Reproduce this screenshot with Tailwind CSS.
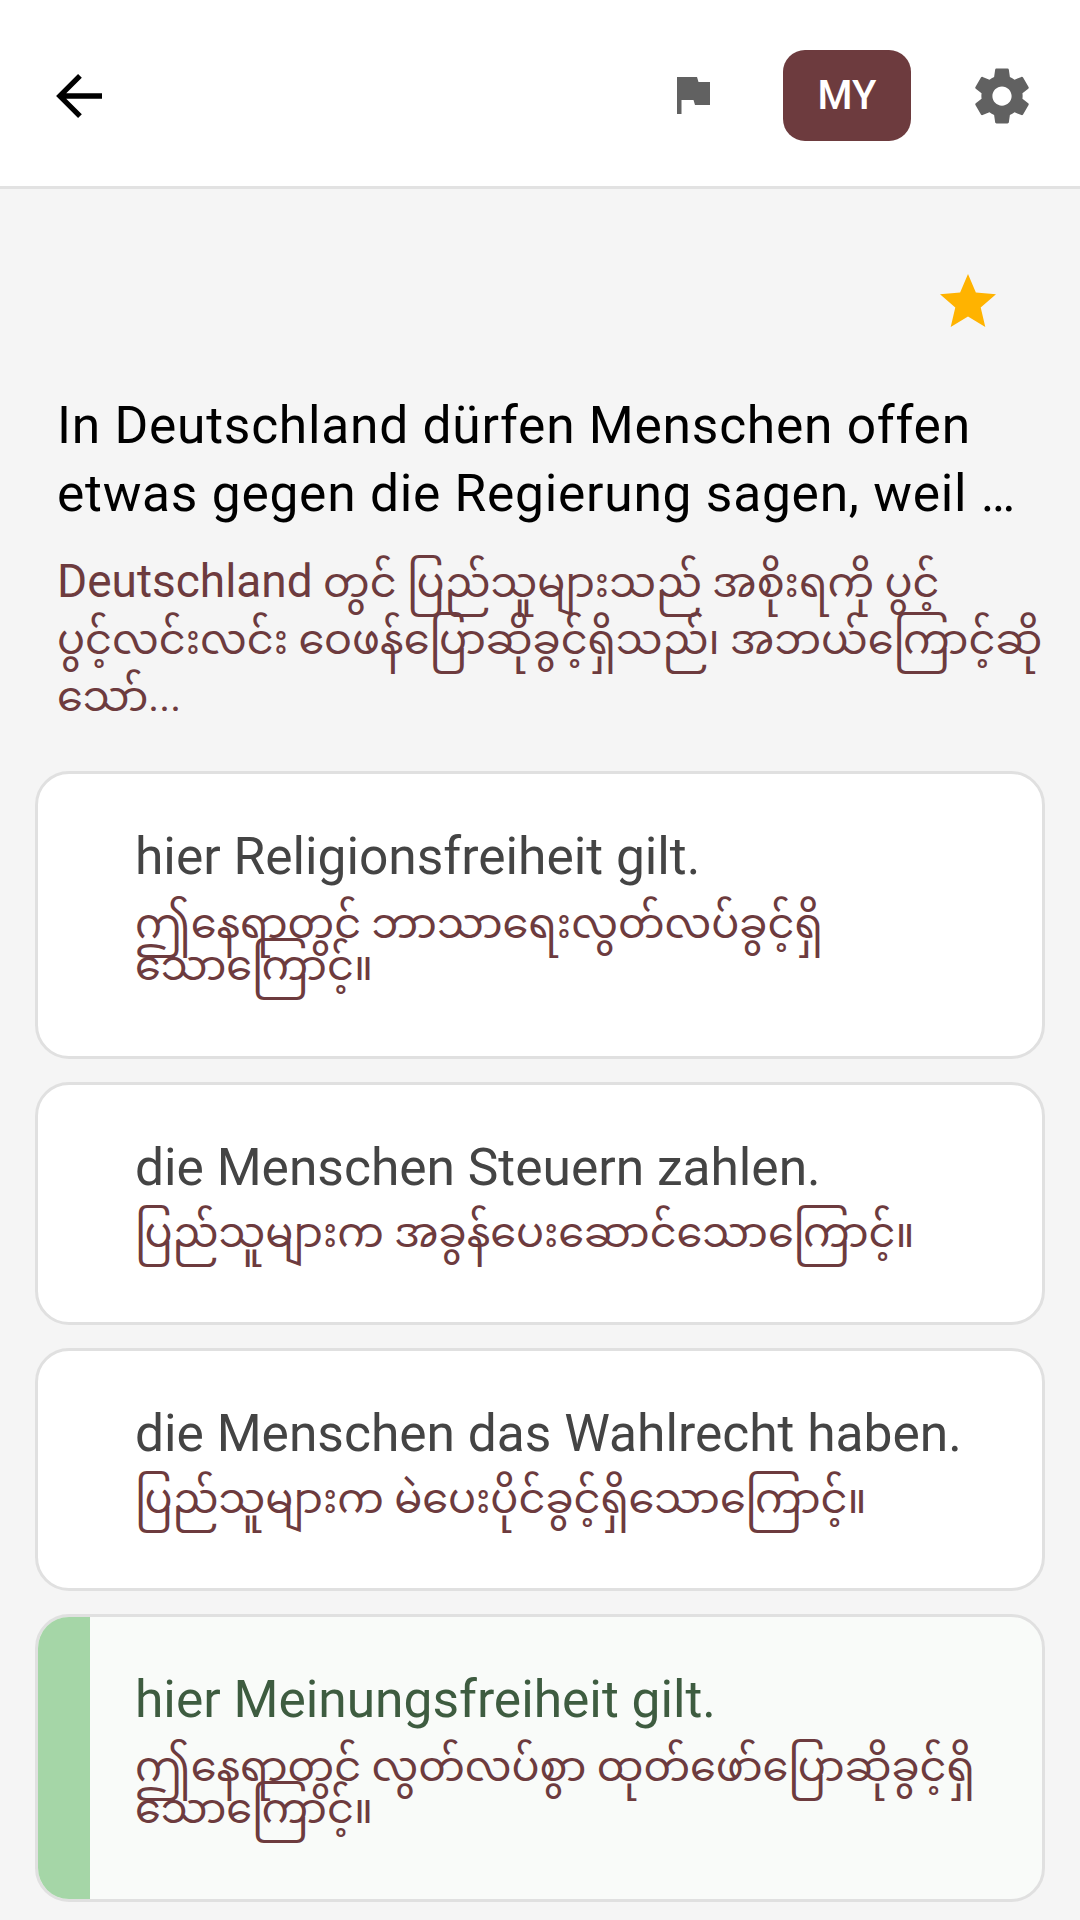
<!DOCTYPE html>
<html lang="my">
<head>
  <meta charset="UTF-8" />
  <title>Frage</title>
  <script src="https://cdn.jsdelivr.net/npm/@tailwindcss/browser@4"></script>
</head>
<body class="w-[1080px] h-[1920px] overflow-hidden bg-[#f5f5f5] font-['Roboto','Noto_Sans','Noto_Sans_Myanmar','Padauk','Myanmar_Text',sans-serif]">

  <!-- Header -->
  <div class="h-[189px] bg-white border-b-[3px] border-[#e2e2e2] flex items-center pt-[5px] pl-[56px] pr-[45px]">
    <svg class="w-[46px] h-[46px]" viewBox="0 0 48 48" fill="none" stroke="#000" stroke-width="5.500">
      <path d="M48 24H4M25 3 4 24l21 21"/>
    </svg>
    <div class="ml-auto flex items-center">
      <svg class="w-[33px] h-[37px]" viewBox="0 0 33 37" fill="#616161">
        <path d="M0 0h20l1.500 5H33v23H18l-1.500-5H4.500v14H0z"/>
      </svg>
      <div class="ml-[73px] w-[128px] h-[91px] rounded-[22px] bg-[#6d3b3e] text-white text-[40px] font-medium flex items-center justify-center">MY</div>
      <svg class="ml-[58px] w-[66px] h-[66px]" viewBox="0 0 24 24" fill="#616161">
        <path d="M19.430 12.980c.04-.32.07-.64.07-.98s-.03-.66-.07-.98l2.110-1.650c.19-.15.24-.42.12-.64l-2-3.460c-.12-.22-.39-.3-.61-.22l-2.490 1c-.52-.4-1.080-.73-1.690-.98l-.38-2.650A.488.488 0 0 0 14 2h-4c-.25 0-.46.18-.49.42l-.38 2.650c-.61.25-1.170.59-1.690.98l-2.490-1c-.23-.09-.49 0-.61.22l-2 3.460c-.13.22-.07.49.12.64l2.110 1.650c-.04.32-.07.65-.07.98s.03.66.07.98l-2.110 1.650c-.19.15-.24.42-.12.64l2 3.460c.12.22.39.3.61.22l2.490-1c.52.4 1.080.73 1.690.98l.38 2.650c.03.24.24.42.49.42h4c.25 0 .46-.18.49-.42l.38-2.650c.61-.25 1.170-.59 1.690-.98l2.490 1c.23.09.49 0 .61-.22l2-3.460c.12-.22.07-.49-.12-.64l-2.110-1.650zM12 15.500c-1.930 0-3.500-1.570-3.500-3.500s1.570-3.500 3.500-3.500 3.500 1.570 3.500 3.500-1.570 3.500-3.500 3.500z"/>
      </svg>
    </div>
  </div>

  <!-- Question -->
  <div class="pl-[57px] pr-[35px] pt-[85px]">
    <div class="flex justify-end pr-[49px]">
      <svg class="w-[56px] h-[53px]" viewBox="2 2 20 19" preserveAspectRatio="none" fill="#ffb300">
        <path d="M12 17.270 18.180 21l-1.640-7.030L22 9.240l-7.190-.61L12 2 9.190 8.630 2 9.240l5.460 4.730L5.820 21z"/>
      </svg>
    </div>
    <p class="mt-[65px] pr-[10px] text-[51.500px] leading-[68px] tracking-[0.750px] text-black">In Deutschland dürfen Menschen offen etwas gegen die Regierung sagen, weil …</p>
    <p class="mt-[25px] text-[41.500px] leading-[57px] text-[#6d3b3e]"><span class="text-[46px]">Deutschland</span> တွင် ပြည်သူများသည် အစိုးရကို ပွင့်ပွင့်လင်းလင်း ဝေဖန်ပြောဆိုခွင့်ရှိသည်၊ အဘယ်ကြောင့်ဆိုသော်...</p>
  </div>

  <!-- Answers -->
  <div class="mt-[46px] mx-[35px] flex flex-col gap-[23px]">
    <div class="bg-white border-[3px] border-[#e0e0e0] rounded-[34px] h-[287.500px] pl-[97px] pr-[40px] pt-[53px]">
      <p class="text-[51.500px] leading-[60px] text-[#444444]">hier Religionsfreiheit gilt.</p>
      <p class="mt-[16px] text-[41.500px] leading-[42px] text-[#6d3b3e]">ဤနေရာတွင် ဘာသာရေးလွတ်လပ်ခွင့်ရှိသောကြောင့်။</p>
    </div>
    <div class="bg-white border-[3px] border-[#e0e0e0] rounded-[34px] h-[243px] pl-[97px] pr-[40px] pt-[53px]">
      <p class="text-[51.500px] leading-[60px] text-[#444444]">die Menschen Steuern zahlen.</p>
      <p class="mt-[14px] text-[41.500px] leading-[42px] text-[#6d3b3e]">ပြည်သူများက အခွန်ပေးဆောင်သောကြောင့်။</p>
    </div>
    <div class="bg-white border-[3px] border-[#e0e0e0] rounded-[34px] h-[243px] pl-[97px] pr-[40px] pt-[53px]">
      <p class="text-[51.500px] leading-[60px] text-[#444444]">die Menschen das Wahlrecht haben.</p>
      <p class="mt-[14px] text-[41.500px] leading-[42px] text-[#6d3b3e]">ပြည်သူများက မဲပေးပိုင်ခွင့်ရှိသောကြောင့်။</p>
    </div>
    <div class="bg-[#f9fbf9] border-[3px] border-[#e0e0e0] rounded-[34px] h-[288px] overflow-hidden flex">
      <div class="w-[52px] shrink-0 bg-[#a5d6a7]"></div>
      <div class="pl-[45px] pr-[40px] pt-[53px]">
        <p class="text-[51.500px] leading-[60px] text-[#3e5c40]">hier Meinungsfreiheit gilt.</p>
        <p class="mt-[16px] text-[41.500px] leading-[42px] text-[#6d3b3e]">ဤနေရာတွင် လွတ်လပ်စွာ ထုတ်ဖော်ပြောဆိုခွင့်ရှိသောကြောင့်။</p>
      </div>
    </div>
  </div>

</body>
</html>
